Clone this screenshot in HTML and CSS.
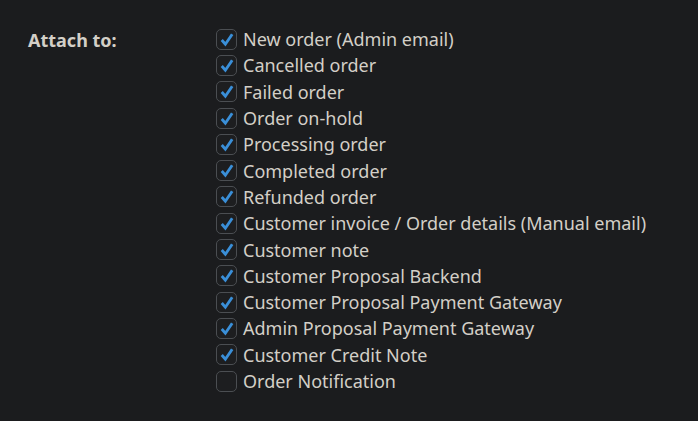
FILE: index.html
```html
<!DOCTYPE html>
<html lang="en">
<head>
    <meta charset="UTF-8">
    <meta name="viewport" content="width=device-width, initial-scale=1.0">
    <title>Attach to</title>
    <link rel="stylesheet" href="styles.css">
</head>
<body>
    <div class="setting">
        <div class="setting-label">Attach to:</div>
        <div class="options">
            <label class="option"><span class="box checked"><svg viewBox="0 0 20 20"><path d="M5 10.5 L8.8 15 L16 4.5"/></svg></span>New order (Admin email)</label>
            <label class="option"><span class="box checked"><svg viewBox="0 0 20 20"><path d="M5 10.5 L8.8 15 L16 4.5"/></svg></span>Cancelled order</label>
            <label class="option"><span class="box checked"><svg viewBox="0 0 20 20"><path d="M5 10.5 L8.8 15 L16 4.5"/></svg></span>Failed order</label>
            <label class="option"><span class="box checked"><svg viewBox="0 0 20 20"><path d="M5 10.5 L8.8 15 L16 4.5"/></svg></span>Order on-hold</label>
            <label class="option"><span class="box checked"><svg viewBox="0 0 20 20"><path d="M5 10.5 L8.8 15 L16 4.5"/></svg></span>Processing order</label>
            <label class="option"><span class="box checked"><svg viewBox="0 0 20 20"><path d="M5 10.5 L8.8 15 L16 4.5"/></svg></span>Completed order</label>
            <label class="option"><span class="box checked"><svg viewBox="0 0 20 20"><path d="M5 10.5 L8.8 15 L16 4.5"/></svg></span>Refunded order</label>
            <label class="option"><span class="box checked"><svg viewBox="0 0 20 20"><path d="M5 10.5 L8.8 15 L16 4.5"/></svg></span>Customer invoice / Order details (Manual email)</label>
            <label class="option"><span class="box checked"><svg viewBox="0 0 20 20"><path d="M5 10.5 L8.8 15 L16 4.5"/></svg></span>Customer note</label>
            <label class="option"><span class="box checked"><svg viewBox="0 0 20 20"><path d="M5 10.5 L8.8 15 L16 4.5"/></svg></span>Customer Proposal Backend</label>
            <label class="option"><span class="box checked"><svg viewBox="0 0 20 20"><path d="M5 10.5 L8.8 15 L16 4.5"/></svg></span>Customer Proposal Payment Gateway</label>
            <label class="option"><span class="box checked"><svg viewBox="0 0 20 20"><path d="M5 10.5 L8.8 15 L16 4.5"/></svg></span>Admin Proposal Payment Gateway</label>
            <label class="option"><span class="box checked"><svg viewBox="0 0 20 20"><path d="M5 10.5 L8.8 15 L16 4.5"/></svg></span>Customer Credit Note</label>
            <label class="option"><span class="box"></span>Order Notification</label>
        </div>
    </div>
</body>
</html>
```

FILE: styles.css
```css
body {
    margin: 0;
    background-color: #1b1c1e;
    color: #d3cfc7;
    font-family: "Noto Sans", "Open Sans", sans-serif;
    font-size: 18px;
}

.setting {
    display: flex;
    padding: 26px 0 0 28px;
}

.setting-label {
    width: 188px;
    font-weight: bold;
    padding-top: 2px;
}

.options {
    display: flex;
    flex-direction: column;
}

.option {
    display: flex;
    align-items: center;
    height: 26.3px;
    cursor: pointer;
}

.box {
    width: 19px;
    height: 19px;
    border: 1px solid #4b4e52;
    border-radius: 5px;
    background-color: #1d1e20;
    margin-right: 6px;
    flex-shrink: 0;
}

.box svg {
    display: block;
    width: 19px;
    height: 19px;
}

.box path {
    fill: none;
    stroke: #3a8fd8;
    stroke-width: 3;
    stroke-linecap: butt;
    stroke-linejoin: miter;
}
```
